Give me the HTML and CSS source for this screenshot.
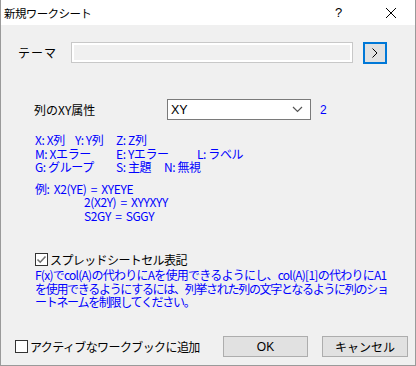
FILE: index.html
```html
<!DOCTYPE html>
<html lang="ja">
<head>
<meta charset="utf-8">
<link rel="stylesheet" href="styles.css">
</head>
<body>
<div class="dialog">
  <div class="titlebar">
    <span class="title">新規ワークシート</span>
    <span class="help">?</span>
    <span class="close"><svg width="12" height="12" viewBox="0 0 12 12"><path d="M1 1L11 11M11 1L1 11" stroke="#000" stroke-width="1" fill="none"/></svg></span>
  </div>
  <div class="body">
    <div class="theme-row">
      <span class="theme-label">テーマ</span>
      <div class="theme-input"><div class="theme-inner"></div></div>
      <div class="arrow-btn"><svg width="8" height="12" viewBox="0 0 8 12"><path d="M1.5 1.5L6 6L1.5 10.5" stroke="#000" stroke-width="1" fill="none"/></svg></div>
    </div>
    <div class="xy-row">
      <span class="xy-label">列のXY属性</span>
      <div class="select"><span>XY</span><svg width="11" height="7" viewBox="0 0 11 7"><path d="M1 1L5.5 5.5L10 1" stroke="#555" stroke-width="1.2" fill="none"/></svg></div>
      <span class="count">2</span>
    </div>
    <div class="legend">
      <div class="line"><span class="c40">X: X列</span><span class="c41">Y: Y列</span><span>Z: Z列</span></div>
      <div class="line"><span class="c81">M: Xエラー</span><span class="c81">E: Yエラー</span><span>L: ラベル</span></div>
      <div class="line"><span class="c81">G: グループ</span><span class="c48">S: 主題</span><span>N: 無視</span></div>
    </div>
    <div class="example">
      <div class="line">例: X2(YE) = XYEYE</div>
      <div class="line indent">2(X2Y) = XYYXYY</div>
      <div class="line indent">S2GY = SGGY</div>
    </div>
    <div class="check-row">
      <span class="checkbox checked"><svg width="11" height="11" viewBox="0 0 11 11"><path d="M1.5 5.5L4.2 8.2L9.5 2.5" stroke="#707070" stroke-width="1.6" fill="none"/></svg></span>
      <span class="check-label">スプレッドシートセル表記</span>
    </div>
    <div class="note">
      <div class="nline n1">F(x)でcol(A)の代わりにAを使用できるようにし、col(A)[1]の代わりにA1</div>
      <div class="nline n2">を使用できるようにするには、列挙された列の文字となるように列のショ</div>
      <div class="nline n2">ートネームを制限してください。</div>
    </div>
    <div class="bottom">
      <div class="add-check"><span class="checkbox"></span><span>アクティブなワークブックに追加</span></div>
      <div class="btn ok">OK</div>
      <div class="btn cancel">キャンセル</div>
    </div>
  </div>
</div>
</body>
</html>
```

FILE: styles.css
```css
* { box-sizing: border-box; }
html, body { margin: 0; padding: 0; }
body {
  width: 416px;
  height: 366px;
  font-family: "Noto Sans CJK JP", "Liberation Sans", sans-serif;
  font-size: 12px;
  color: #000;
  overflow: hidden;
}
.dialog {
  width: 416px;
  height: 366px;
  display: flex;
  flex-direction: column;
  border: 1px solid #9a9a9a;
  border-top: none;
}
.titlebar {
  height: 25px;
  background: #fff;
  display: flex;
  align-items: center;
  padding-left: 3px;
  flex-shrink: 0;
}
.title {
  font-size: 11.5px;
  letter-spacing: -0.6px;
  flex: 1;
}
.help {
  font-family: "Liberation Sans", sans-serif;
  font-size: 13px;
  width: 12px;
  margin-right: 38px;
}
.close {
  width: 12px;
  height: 12px;
  display: flex;
  margin-right: 18px;
}
.body {
  flex: 1;
  background: #f0f0f0;
  padding: 17px 0 0 0;
  position: relative;
}
.theme-row {
  display: flex;
  align-items: center;
  height: 21px;
}
.theme-label {
  width: 70px;
  padding-left: 17px;
  letter-spacing: 1px;
}
.theme-input {
  width: 282px;
  height: 21px;
  border: 1px solid #c8c8c8;
  background: #fff;
  padding: 2px;
}
.theme-inner {
  width: 100%;
  height: 100%;
  background: #f0f0f0;
}
.arrow-btn {
  width: 24px;
  height: 22px;
  margin-left: 10px;
  border: 2px solid #0078d7;
  background: #e1e1e1;
  display: flex;
  align-items: center;
  justify-content: center;
}
.xy-row {
  display: flex;
  align-items: center;
  height: 21px;
  margin-top: 36px;
}
.xy-label {
  width: 166px;
  padding-left: 33px;
}
.select {
  width: 144px;
  height: 21px;
  border: 1px solid #7a7a7a;
  background: #fff;
  display: flex;
  align-items: center;
  justify-content: space-between;
  padding: 0 7px 0 3px;
  font-family: "Liberation Sans", sans-serif;
  font-size: 12.5px;
}
.count {
  color: #0000ff;
  margin-left: 9px;
  font-family: "Liberation Sans", sans-serif;
}
.legend, .example, .note {
  color: #0000ff;
  padding-left: 34px;
}
.legend { margin-top: 13px; }
.line {
  display: flex;
  height: 13.5px;
  line-height: 13.5px;
  white-space: nowrap;
  letter-spacing: -0.4px;
}
.example .line { word-spacing: 2px; }
.c40 { width: 40px; }
.c41 { width: 41px; }
.c81 { width: 81px; }
.c48 { width: 48px; }
.example { margin-top: 8px; }
.indent { padding-left: 49px; }
.check-row {
  display: flex;
  align-items: center;
  padding-left: 34px;
  margin-top: 30px;
  height: 14px;
}
.check-label { letter-spacing: -0.6px; }
.checkbox {
  width: 13px;
  height: 13px;
  border: 1px solid #333;
  background: #fff;
  display: inline-flex;
  align-items: center;
  justify-content: center;
  margin-right: 2px;
  flex-shrink: 0;
}
.note { margin-top: 2px; }
.nline {
  height: 13.5px;
  line-height: 13.5px;
  white-space: nowrap;
}
.n1 { letter-spacing: -0.75px; }
.n2 { letter-spacing: -1.3px; }
.bottom {
  position: absolute;
  left: 0;
  right: 0;
  bottom: 8px;
  display: flex;
  align-items: center;
  height: 21px;
  padding-left: 14px;
}
.add-check {
  display: flex;
  align-items: center;
  width: 208px;
  letter-spacing: -0.6px;
}
.btn {
  height: 21px;
  border: 1px solid #adadad;
  background: #e1e1e1;
  display: flex;
  align-items: center;
  justify-content: center;
}
.ok { width: 85px; font-family: "Liberation Sans", sans-serif; }
.cancel { width: 86px; margin-left: 14px; }
```
